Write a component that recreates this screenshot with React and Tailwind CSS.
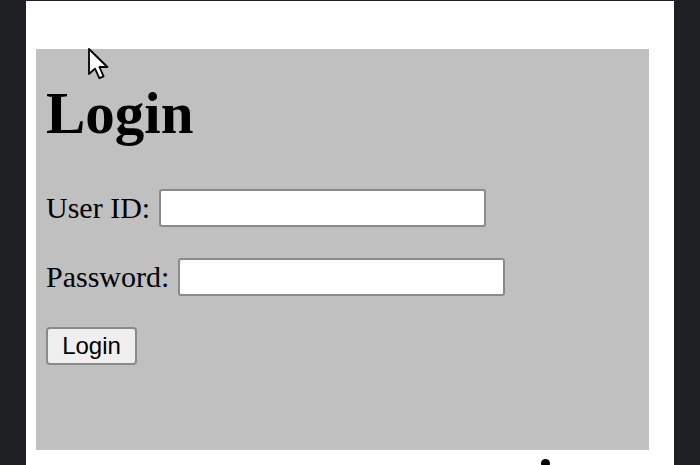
import React from 'react'

// Arrow cursor drawn over the form
const Cursor = () => (
    <svg
        className="absolute left-[87px] top-[47px]"
        width="26"
        height="34"
        viewBox="0 0 13 17"
    >
        <path
            d="M1 1 L1 13.5 L4 10.8 L6.2 15.6 L8.3 14.7 L6.2 10 L10.2 10 Z"
            fill="#ffffff"
            stroke="#000000"
            strokeWidth="0.9"
            strokeLinejoin="round"
        />
    </svg>
)

const Field = ({ label, type = 'text' }) => (
    <label className="flex items-center gap-[9px]">
        <span className="text-[30px] leading-none text-black whitespace-nowrap">{label}</span>
        <input
            type={type}
            className="shrink-0 w-[327px] h-[38px] bg-white border-2 border-[#8a8a8a] rounded-[3px] outline-none"
        />
    </label>
)

export default function App() {
    return (
        <div
            className="relative w-[700px] h-[465px] overflow-hidden bg-[#1f2023] pt-px pl-[26px] pr-[26px]"
            style={{ fontFamily: '"Liberation Serif", "Times New Roman", serif' }}
        >
            <div className="h-[464px] bg-white pt-[48px] pl-[10px] pr-[25px]">
                {/* Form panel */}
                <div className="h-[401px] bg-[#c0c0c0] pl-[10px] pt-[35px] flex flex-col items-start">
                    <h1 className="text-[59px] leading-[59px] font-bold text-black">Login</h1>

                    <div className="mt-[46px] flex flex-col items-start gap-[31px]">
                        <Field label="User ID:" />
                        <Field label="Password:" type="password" />
                    </div>

                    <button
                        className="mt-[31px] w-[91px] h-[38px] bg-[#efefef] border-2 border-[#8a8a8a] rounded-[4px] text-[24px] leading-none text-black"
                        style={{ fontFamily: '"Liberation Sans", Arial, sans-serif' }}
                    >
                        Login
                    </button>
                </div>
            </div>

            <Cursor />
            <div className="absolute left-[541px] top-[459px] w-[9px] h-[9px] rounded-full bg-black" />
        </div>
    )
}
